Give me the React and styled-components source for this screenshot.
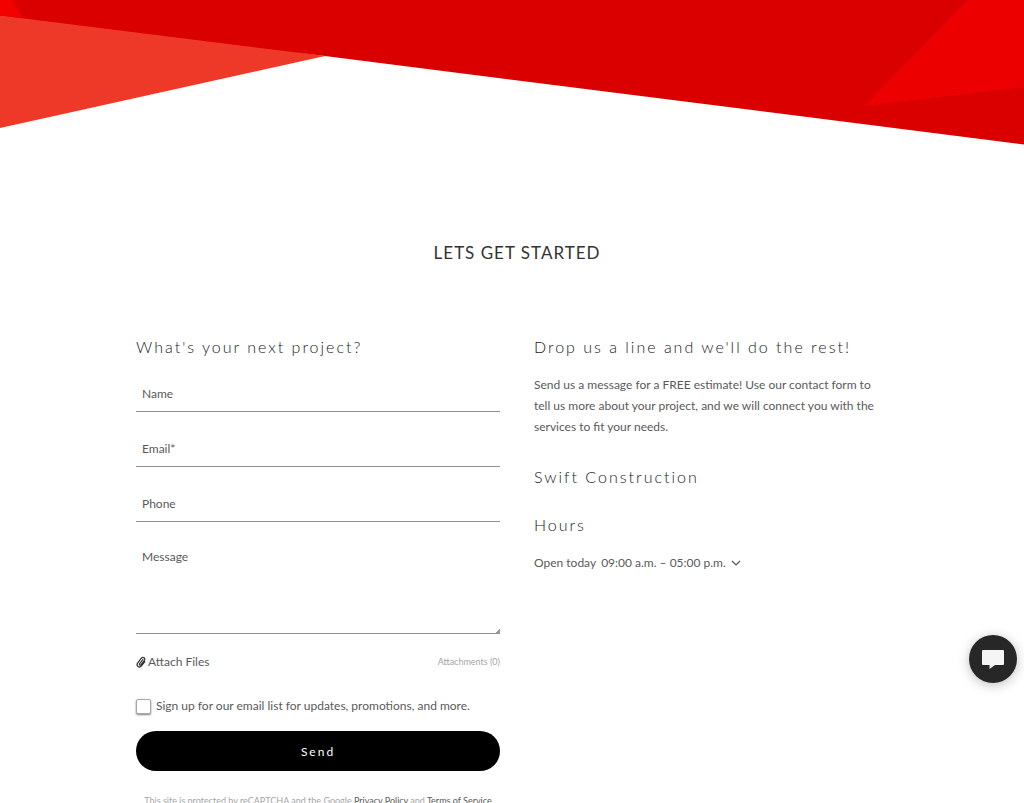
import React, { useState } from 'react';
import styled, { createGlobalStyle } from 'styled-components';

const GlobalStyle = createGlobalStyle`
	* {
		box-sizing: border-box;
	}

	body {
		margin: 0;
		background-color: #fff;
		color: #5a5a5a;
		font-family: Lato, "Open Sans", sans-serif;
		font-size: 12px;
		overflow-x: hidden;
	}

	button, input, textarea {
		font-family: inherit;
		font-size: inherit;
		color: inherit;
	}
`;

const Banner = styled.svg`
	display: block;
	width: 100%;
	height: 145px;
`;

const Section = styled.section`
	display: flex;
	flex-direction: column;
	gap: 70px;
	padding: 96px 126px 40px 136px;

	@media (max-width: 767px) {
		padding: 48px 24px;
	}
`;

const Title = styled.h1`
	margin: 0;
	color: #333;
	font-size: 17px;
	font-weight: 400;
	line-height: 24px;
	letter-spacing: 1px;
	text-align: center;
	text-transform: uppercase;
`;

const Columns = styled.div`
	display: grid;
	grid-template-columns: 1fr 1fr;
	column-gap: 34px;
	align-items: start;

	@media (max-width: 767px) {
		grid-template-columns: 1fr;
		row-gap: 40px;
	}
`;

const Heading = styled.h2`
	margin: 0;
	color: #222;
	font-size: 16px;
	font-weight: 300;
	line-height: 24px;
	letter-spacing: 2px;
`;

const Form = styled.form`
	display: flex;
	flex-direction: column;
`;

const Fields = styled.div`
	display: grid;
	row-gap: 19px;
	margin-top: 17px;
`;

/* label and control share one cell, the label hides once something is typed */
const Field = styled.div`
	display: grid;

	label, input, textarea {
		grid-area: 1 / 1;
	}

	label {
		justify-self: start;
		align-self: start;
		padding: ${({ $tall }) => ($tall ? '8px' : '10px')} 6px;
		line-height: 16px;
		pointer-events: none;
		z-index: 1;
	}

	input, textarea {
		display: block;
		width: 100%;
		height: ${({ $tall }) => ($tall ? '93px' : '36px')};
		padding: 8px 6px;
		border: none;
		border-bottom: 1px solid #919191;
		border-radius: 0;
		outline: none;
		background: transparent;
		resize: vertical;
	}

	textarea::-webkit-resizer {
		background: linear-gradient(135deg, transparent 85%, #999 85%);
	}

	&:has(:not(:placeholder-shown):is(input, textarea)) label {
		visibility: hidden;
	}
`;

const AttachRow = styled.div`
	display: flex;
	justify-content: space-between;
	align-items: center;
	margin-top: 18px;
	line-height: 20px;
`;

const AttachButton = styled.button`
	display: flex;
	align-items: center;
	gap: 2px;
	padding: 0;
	border: none;
	background: none;
	line-height: 20px;
	cursor: pointer;
`;

const Count = styled.span`
	color: #a5a5a5;
	font-size: 9px;
`;

const SignUp = styled.label`
	display: flex;
	align-items: center;
	gap: 5px;
	margin-top: 24px;
	line-height: 20px;

	input {
		appearance: none;
		width: 15px;
		height: 15px;
		margin: 0;
		border: 1px solid #a8a8a8;
		border-radius: 2px;
		background-color: #fff;
		box-shadow: 0 1px 2px rgba(0, 0, 0, 0.5);
	}

	input:checked {
		background-color: #000;
	}
`;

const SendButton = styled.button`
	height: 40px;
	margin-top: 15px;
	border: none;
	border-radius: 20px;
	background-color: #000;
	color: #fff;
	letter-spacing: 2px;
	cursor: pointer;
`;

const Legal = styled.p`
	margin: 22px 0 0;
	color: #a5a5a5;
	font-size: 9px;
	line-height: 16px;
	text-align: center;

	a {
		color: #5a5a5a;
		text-decoration: none;
	}
`;

const Info = styled.div`
	display: grid;
	row-gap: 24px;
	justify-items: start;
`;

const Text = styled.p`
	margin: 0;
	padding: 15px 12px 4px 0;
	line-height: 21px;
`;

const HoursButton = styled.button`
	display: flex;
	align-items: center;
	gap: 5px;
	margin-top: 16px;
	padding: 0;
	border: none;
	background: none;
	line-height: 20px;
	cursor: pointer;

	svg {
		transform: ${({ $open }) => ($open ? 'rotate(180deg)' : 'none')};
	}
`;

const ChatButton = styled.button`
	position: fixed;
	right: 7px;
	bottom: 120px;
	display: flex;
	justify-content: center;
	align-items: center;
	width: 48px;
	height: 48px;
	padding: 0;
	border: none;
	border-radius: 50%;
	background-color: #272727;
	box-shadow: 0 2px 12px rgba(0, 0, 0, 0.25);
	cursor: pointer;
`;

const FIELDS = [
	{ id: 'name', label: 'Name', type: 'text' },
	{ id: 'email', label: 'Email*', type: 'email' },
	{ id: 'phone', label: 'Phone', type: 'tel' },
];

const ContactForm = () => (
	<Form onSubmit={(e) => e.preventDefault()}>
		<Heading>What's your next project?</Heading>
		<Fields>
			{FIELDS.map(({ id, label, type }) => (
				<Field key={id}>
					<label htmlFor={id}>{label}</label>
					<input id={id} type={type} placeholder=" " />
				</Field>
			))}
			<Field $tall>
				<label htmlFor="message">Message</label>
				<textarea id="message" placeholder=" " />
			</Field>
		</Fields>
		<AttachRow>
			<AttachButton type="button">
				<svg width="10" height="12" viewBox="0 0 10 12" fill="none" stroke="#333" strokeWidth="1.2" strokeLinecap="round">
					<path d="M6.9 3.5 3.7 7.6c-.9 1.2.5 2.2 1.4 1.1l3.1-4.1C9.9 2.3 7 .1 5.2 2.4L1.9 6.7C-.5 9.9 3.3 12.7 5.7 9.7L8.8 5.7" />
				</svg>
				Attach Files
			</AttachButton>
			<Count>Attachments (0)</Count>
		</AttachRow>
		<SignUp>
			<input type="checkbox" />
			Sign up for our email list for updates, promotions, and more.
		</SignUp>
		<SendButton type="submit">Send</SendButton>
		<Legal>
			This site is protected by reCAPTCHA and the Google <a href="#privacy">Privacy Policy</a> and <a href="#terms">Terms of Service</a>
		</Legal>
	</Form>
);

const App = () => {
	const [open, setOpen] = useState(false);

	return (
		<>
			<GlobalStyle />
			<Banner viewBox="0 0 1024 145" preserveAspectRatio="none" aria-hidden="true">
				<polygon points="0,10 325,56 0,128" fill="#ee3828" />
				<polygon points="0,0 1024,0 1024,144.5 325,56 0,15.5" fill="#db0000" />
				<polygon points="0,0 12,0 23,18 0,15.5" fill="#f30000" />
				<polygon points="968,0 1024,0 1024,87 864,106" fill="#ed0000" />
			</Banner>
			<Section>
				<Title>Lets get started</Title>
				<Columns>
					<ContactForm />
					<Info>
						<div>
							<Heading>Drop us a line and we'll do the rest!</Heading>
							<Text>
								Send us a message for a FREE estimate! Use our contact form to tell us more about your project, and we will connect you with the services to fit your needs.
							</Text>
						</div>
						<Heading>Swift Construction</Heading>
						<div>
							<Heading>Hours</Heading>
							<HoursButton type="button" $open={open} aria-expanded={open} onClick={() => setOpen(!open)}>
								<span>Open today</span>
								<span>09:00 a.m. – 05:00 p.m.</span>
								<svg width="10" height="10" viewBox="0 0 10 10" fill="none" stroke="#555" strokeWidth="1.2">
									<path d="M1 3l4 4 4-4" />
								</svg>
							</HoursButton>
						</div>
					</Info>
				</Columns>
			</Section>
			<ChatButton type="button" aria-label="Open chat">
				<svg width="22" height="19" viewBox="0 0 22 19" fill="#f5f5f5">
					<path d="M1 0h20a1 1 0 0 1 1 1v13a1 1 0 0 1-1 1h-8l-5.5 4v-4H1a1 1 0 0 1-1-1V1a1 1 0 0 1 1-1z" />
				</svg>
			</ChatButton>
		</>
	);
};

export default App;
